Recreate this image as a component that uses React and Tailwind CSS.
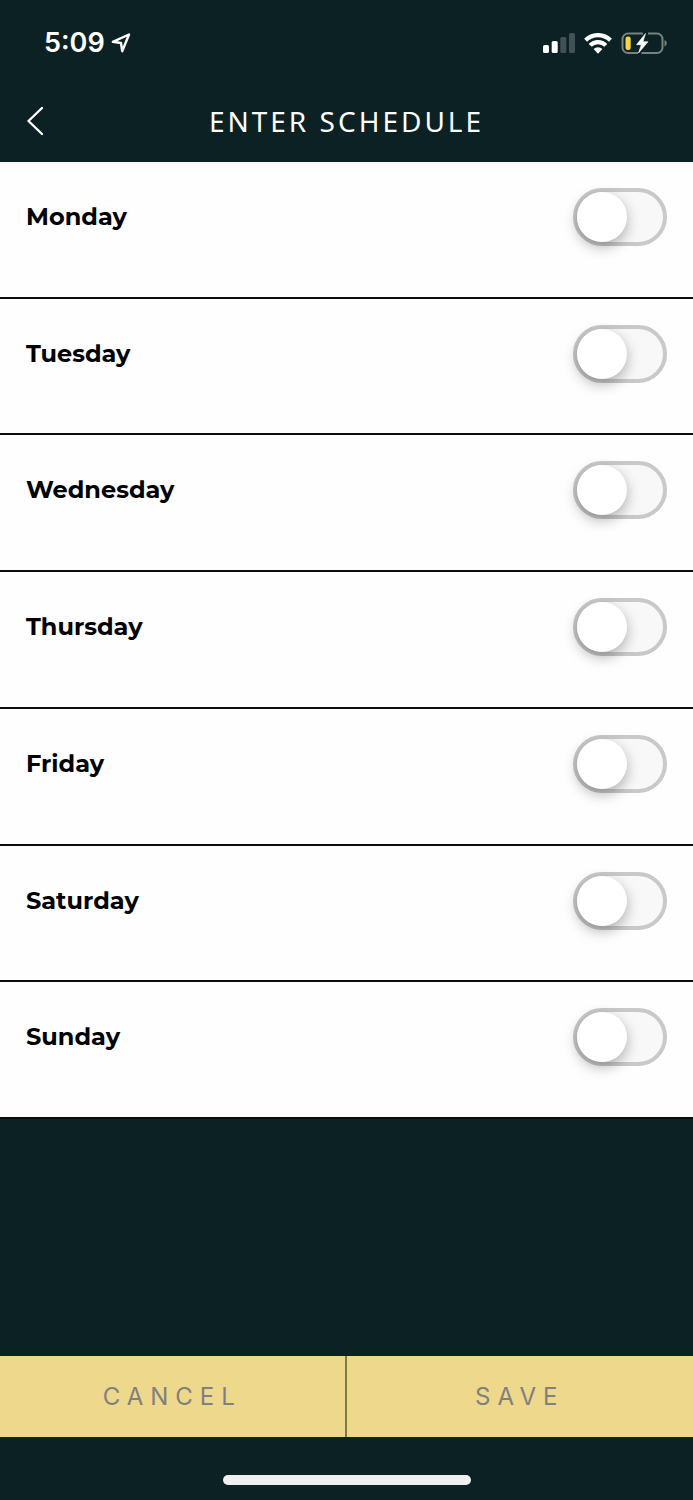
import { useState } from "react";

const DAYS = [
  "Monday",
  "Tuesday",
  "Wednesday",
  "Thursday",
  "Friday",
  "Saturday",
  "Sunday",
];

const LocationIcon = () => (
  <svg width="20" height="20" viewBox="0 0 20 20" fill="none" aria-hidden="true">
    <path
      d="M18 1.5L1.8 8.8L10 10L11.2 18.2Z"
      stroke="white"
      strokeWidth="2.4"
      strokeLinejoin="round"
    />
  </svg>
);

const SignalIcon = () => (
  <svg width="32" height="20" viewBox="0 0 32 20" fill="white" aria-hidden="true">
    <rect x="0" y="12" width="6" height="8" rx="1.6" />
    <rect x="8.7" y="8" width="6" height="12" rx="1.6" />
    <rect x="17.3" y="4" width="6" height="16" rx="1.6" opacity="0.22" />
    <rect x="26" y="0" width="6" height="20" rx="1.6" opacity="0.22" />
  </svg>
);

const WifiIcon = () => (
  <svg width="28" height="21" viewBox="0 0 28 21" aria-hidden="true">
    <g fill="none" stroke="white" strokeWidth="4.2">
      <path d="M1.6 7.2A17.6 17.6 0 0 1 26.4 7.2" />
      <path d="M6.2 12.4A10.9 10.9 0 0 1 21.8 12.4" />
    </g>
    <path
      d="M9.6 16.1A6.2 6.2 0 0 1 18.4 16.1L14.5 20.2Q14 20.7 13.5 20.2Z"
      fill="white"
    />
  </svg>
);

const BatteryIcon = () => (
  <svg width="46" height="24" viewBox="0 0 46 24" aria-hidden="true">
    <g fill="none" stroke="#77817f" strokeWidth="2">
      <path d="M17 22H7A5.5 5.5 0 0 1 1.5 16.5V8A5.5 5.5 0 0 1 7 2.5H22" />
      <path d="M27 2.5H36A5.5 5.5 0 0 1 41.5 8V16.5A5.5 5.5 0 0 1 36 22H20.5" />
    </g>
    <path d="M43.5 9Q45.8 10 45.8 12.3Q45.8 14.7 43.5 15.7Z" fill="#77817f" />
    <rect x="4.5" y="5.5" width="5.2" height="13.5" rx="2.2" fill="#fdd23c" />
    <path
      d="M24.5 2.5L15.5 13.7H20.3L17.5 22L27 10.7H22Z"
      fill="white"
      stroke="white"
      strokeWidth="0.6"
      strokeLinejoin="round"
    />
  </svg>
);

const StatusBar = () => (
  <div className="flex items-center justify-between pt-[25px] pr-[26px] pl-11">
    <div className="flex items-center gap-1.5">
      <span className="font-['Inter',sans-serif] text-[27px] leading-9 font-semibold text-white">
        5:09
      </span>
      <LocationIcon />
    </div>
    <div className="flex items-center gap-[9px]">
      <SignalIcon />
      <WifiIcon />
      <BatteryIcon />
    </div>
  </div>
);

const DayRow = ({ day, enabled, onToggle }) => (
  <li className="border-b-2 border-[#0a0c10]">
    <label className="flex cursor-pointer items-start justify-between px-[26px] pt-[26px]">
      <span className="font-['Montserrat','Inter',sans-serif] text-2xl leading-[58px] font-bold text-black">
        {day}
      </span>
      <input
        type="checkbox"
        role="switch"
        checked={enabled}
        onChange={onToggle}
        className="flex h-[58px] w-[94px] cursor-pointer appearance-none items-center rounded-full border-4 border-[#c9c9c9] bg-[#f8f8f8] before:size-[50px] before:shrink-0 before:rounded-full before:bg-white before:shadow-[0_5px_14px_rgba(0,0,0,0.3)] before:transition-transform before:content-[''] checked:bg-[#edd88b] checked:before:translate-x-9"
      />
    </label>
  </li>
);

const App = () => {
  const [schedule, setSchedule] = useState({});

  const toggleDay = (day) => {
    setSchedule({ ...schedule, [day]: !schedule[day] });
  };

  return (
    <div className="flex min-h-screen flex-col bg-[#0c2124]">
      <header className="h-[162px]">
        <StatusBar />
        <div className="mt-9 grid grid-cols-[1fr_auto_1fr] items-center px-[26px]">
          <button type="button" aria-label="Back" className="w-5 cursor-pointer">
            <svg width="18" height="30" viewBox="0 0 18 30" fill="none">
              <path
                d="M16 2L2.5 15L16 28"
                stroke="white"
                strokeWidth="2.4"
                strokeLinecap="round"
                strokeLinejoin="round"
              />
            </svg>
          </button>
          <h1 className="font-['Noto_Sans',sans-serif] text-[28px] leading-12 tracking-[3px] text-white uppercase">
            Enter Schedule
          </h1>
        </div>
      </header>

      <ul className="grid min-h-[957px] auto-rows-fr bg-[#fefefe]">
        {DAYS.map((day) => (
          <DayRow
            key={day}
            day={day}
            enabled={!!schedule[day]}
            onToggle={() => toggleDay(day)}
          />
        ))}
      </ul>

      <footer className="mt-auto">
        <div className="grid grid-cols-2 bg-[#edd88b] font-['Inter',sans-serif] text-2xl tracking-[7px] text-[#808080]">
          <button
            type="button"
            className="h-[81px] cursor-pointer border-r-2 border-[#81774f] uppercase"
          >
            Cancel
          </button>
          <button type="button" className="h-[81px] cursor-pointer uppercase">
            Save
          </button>
        </div>
        {/* Home indicator */}
        <div className="flex h-[63px] items-end justify-center pb-[15px]">
          <div className="h-2.5 w-[248px] rounded-full bg-[#f0f0f0]" />
        </div>
      </footer>
    </div>
  );
};

export default App;
